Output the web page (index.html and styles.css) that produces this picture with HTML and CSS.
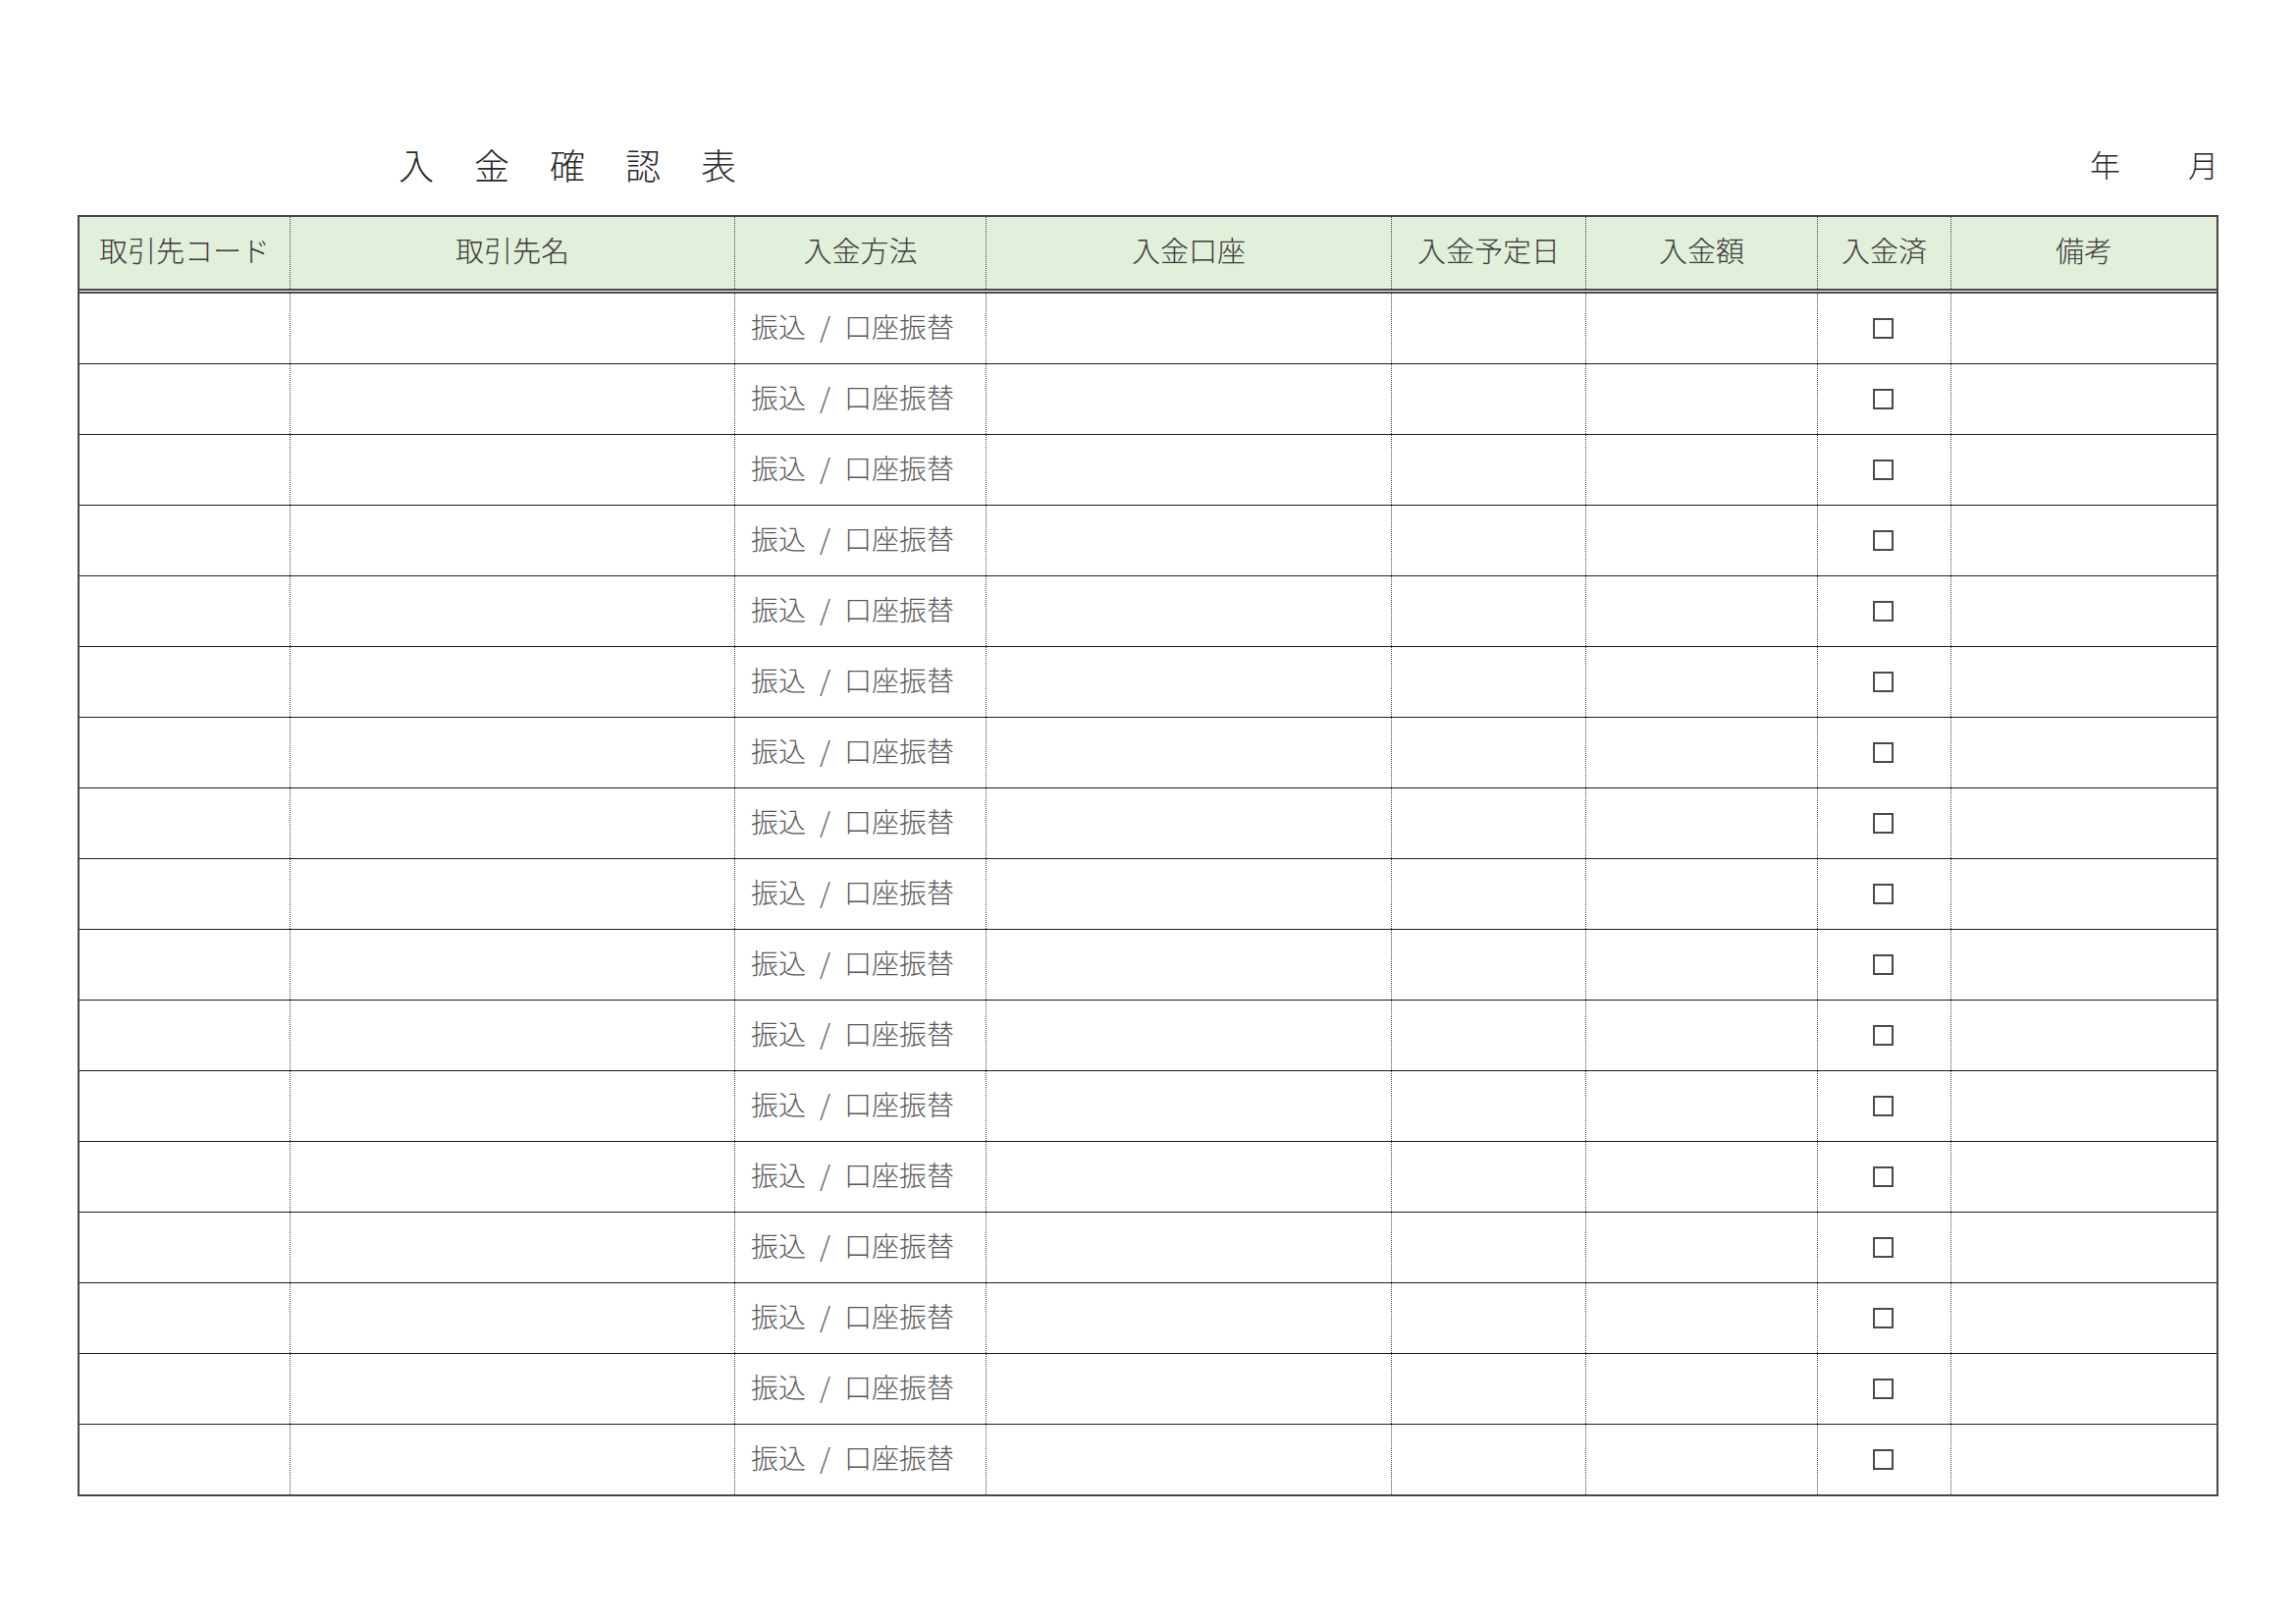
FILE: index.html
```html
<!DOCTYPE html>
<html lang="ja">
<head>
<meta charset="utf-8">
<title>入金確認表</title>
<link rel="stylesheet" href="styles.css">
</head>
<body>
<div class="page">
  <div class="head">
    <h1 class="title">入金確認表</h1>
    <div class="date"><span class="yr">年</span><span class="mo">月</span></div>
  </div>
  <div class="sheet">
    <div class="row hdr">
      <div class="cell">取引先コード</div>
      <div class="cell">取引先名</div>
      <div class="cell">入金方法</div>
      <div class="cell">入金口座</div>
      <div class="cell">入金予定日</div>
      <div class="cell">入金額</div>
      <div class="cell">入金済</div>
      <div class="cell">備考</div>
    </div>
    <div id="rows"></div>
  </div>
</div>
<script src="script.js"></script>
</body>
</html>
```
FILE: script.js
```js
(function () {
  var rows = document.getElementById('rows');
  var html = '';
  for (var i = 0; i < 17; i++) {
    html += '<div class="row body">' +
      '<div class="cell"></div>' +
      '<div class="cell"></div>' +
      '<div class="cell method">振込<span class="sep">/</span>口座振替</div>' +
      '<div class="cell"></div>' +
      '<div class="cell"></div>' +
      '<div class="cell"></div>' +
      '<div class="cell check"><span class="box"></span></div>' +
      '<div class="cell"></div>' +
      '</div>';
  }
  rows.innerHTML = html;
})();
```
FILE: styles.css
```css
html, body {
  margin: 0;
  padding: 0;
  background: #ffffff;
}
body {
  font-family: "Noto Sans CJK JP", "Noto Sans", sans-serif;
  font-weight: 300;
  color: #333;
}
.page {
  padding: 0 79px;
  width: 2181px;
}
.head {
  height: 219px;
  box-sizing: border-box;
  padding-top: 147px;
  display: flex;
  justify-content: space-between;
  align-items: flex-start;
}
.title {
  margin: 0 0 0 327px;
  font-size: 36px;
  font-weight: 300;
  line-height: 40px;
  letter-spacing: 41px;
  color: #2a2a2a;
}
.date {
  font-size: 31px;
  line-height: 40px;
  color: #2a2a2a;
  display: flex;
  padding-right: 0;
}
.yr {
  margin-right: 69px;
}
.sheet {
  width: 2181px;
  box-sizing: border-box;
  border: 2px solid #474747;
}
.row {
  display: grid;
  grid-template-columns: 214px 453px 256px 413px 198px 236px 136px 271px;
}
.cell {
  box-sizing: border-box;
  border-left: 1px dotted #444;
}
.cell:first-child {
  border-left: none;
}
.hdr {
  height: 78px;
  box-sizing: border-box;
  border-bottom: 5px double #474747;
}
.hdr .cell {
  background: #e2efda;
  display: flex;
  align-items: center;
  justify-content: center;
  font-size: 29px;
  color: #3a3a3a;
  padding-bottom: 8px;
}
.body {
  height: 72px;
  box-sizing: border-box;
  border-bottom: 1px solid #1e1e1e;
}
#rows .body:last-child {
  border-bottom: none;
  height: 71px;
}
.method {
  display: flex;
  align-items: center;
  padding-left: 16px;
  padding-bottom: 5px;
  font-size: 28px;
  color: #595959;
}
.sep {
  margin: 0 14px;
}
.check {
  display: flex;
  align-items: center;
  justify-content: center;
}
.box {
  width: 21px;
  height: 21px;
  box-sizing: border-box;
  border: 2px solid #4a4a4a;
  margin-left: -2px;
}
```
